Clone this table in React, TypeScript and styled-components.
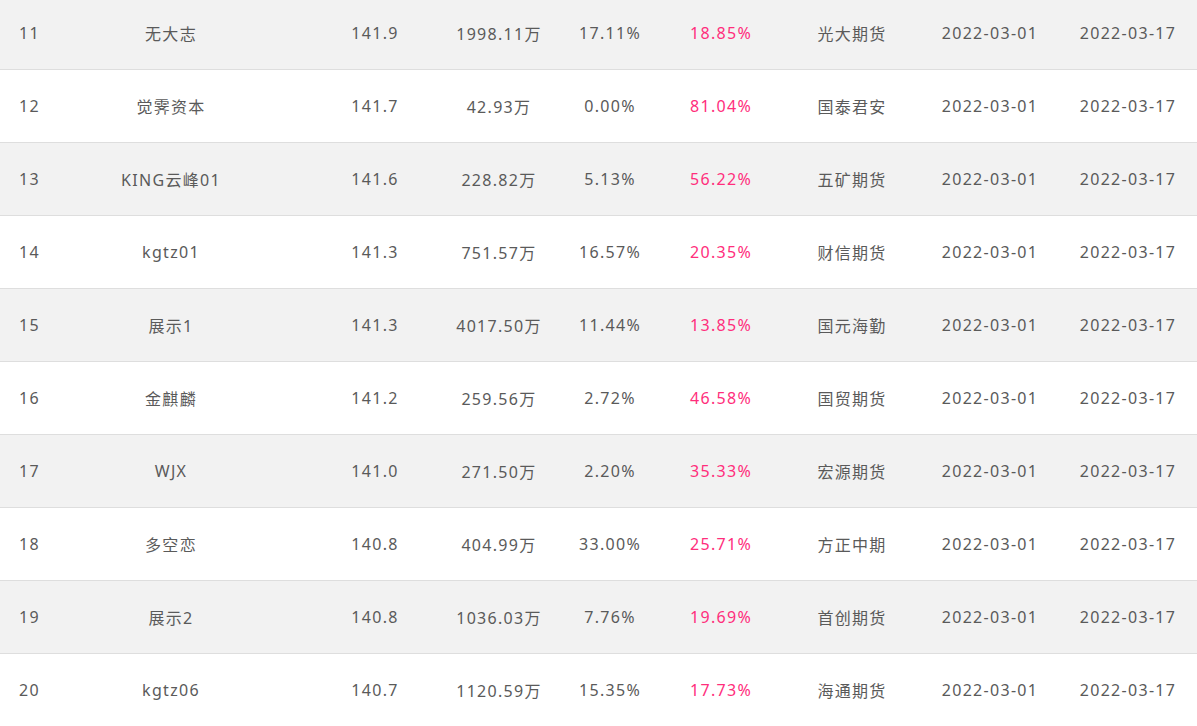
import React from "react";
import styled, { createGlobalStyle } from "styled-components";

const Global = createGlobalStyle`
  html, body { margin: 0; padding: 0; background: #ffffff; overflow: hidden; }
  body { font-family: "Noto Sans", "Noto Sans CJK SC", sans-serif; }
`;

const Table = styled.div`
  width: 1197px;
  margin-top: -3px;
  display: flex;
  flex-direction: column;
`;

const Row = styled.div<{ $shaded: boolean }>`
  display: grid;
  grid-template-columns: 56px 257px 124px 124px 98px 124px 138px 138px 138px;
  height: 72px;
  align-items: center;
  background: ${(p) => (p.$shaded ? "#f2f2f2" : "#ffffff")};
  border-bottom: 1px solid #dedede;
`;

const Cell = styled.div<{ $pink?: boolean }>`
  font-size: 16px;
  letter-spacing: 1.3px;
  color: ${(p) => (p.$pink ? "#ff2e7c" : "#5a5a5a")};
  text-align: center;
  white-space: nowrap;
`;

const RankCell = styled(Cell)`
  text-align: left;
  padding-left: 19px;
`;

const NameCell = styled(Cell)`
  padding-right: 27px;
`;

type Item = [string, string, string, string, string, string, string];

const rows: Item[] = [
  ["11", "无大志", "141.9", "1998.11万", "17.11%", "18.85%", "光大期货"],
  ["12", "觉霁资本", "141.7", "42.93万", "0.00%", "81.04%", "国泰君安"],
  ["13", "KING云峰01", "141.6", "228.82万", "5.13%", "56.22%", "五矿期货"],
  ["14", "kgtz01", "141.3", "751.57万", "16.57%", "20.35%", "财信期货"],
  ["15", "展示1", "141.3", "4017.50万", "11.44%", "13.85%", "国元海勤"],
  ["16", "金麒麟", "141.2", "259.56万", "2.72%", "46.58%", "国贸期货"],
  ["17", "WJX", "141.0", "271.50万", "2.20%", "35.33%", "宏源期货"],
  ["18", "多空恋", "140.8", "404.99万", "33.00%", "25.71%", "方正中期"],
  ["19", "展示2", "140.8", "1036.03万", "7.76%", "19.69%", "首创期货"],
  ["20", "kgtz06", "140.7", "1120.59万", "15.35%", "17.73%", "海通期货"],
];

export default function App() {
  return (
    <>
      <Global />
      <Table>
        {rows.map((r, i) => (
          <Row key={r[0]} $shaded={i % 2 === 0}>
            <RankCell>{r[0]}</RankCell>
            <NameCell>{r[1]}</NameCell>
            <Cell>{r[2]}</Cell>
            <Cell>{r[3]}</Cell>
            <Cell>{r[4]}</Cell>
            <Cell $pink>{r[5]}</Cell>
            <Cell>{r[6]}</Cell>
            <Cell>2022-03-01</Cell>
            <Cell>2022-03-17</Cell>
          </Row>
        ))}
      </Table>
    </>
  );
}
